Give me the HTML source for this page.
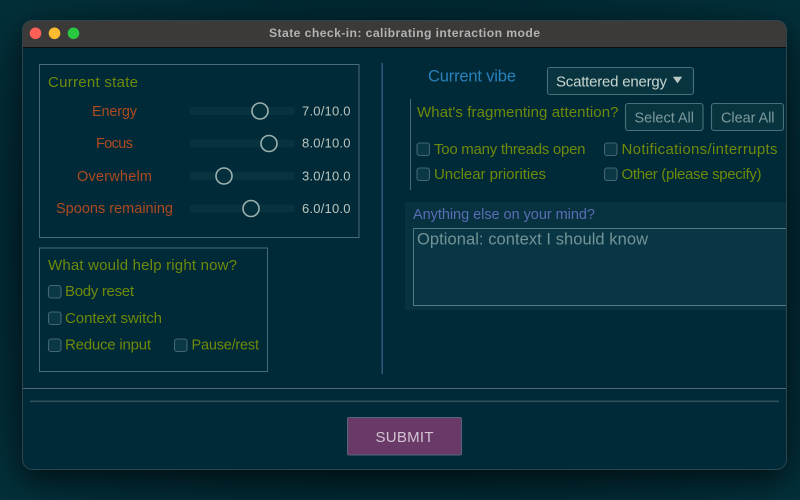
<!DOCTYPE html>
<html>
<head>
<meta charset="utf-8">
<title>State check-in</title>
<style>
html,body{margin:0;padding:0;width:800px;height:500px;overflow:hidden;background:#012a35}
#bg{position:absolute;left:0;top:0;width:800px;height:500px;background:radial-gradient(ellipse at 50% 50%,#01242f 0%,#01252f 60%,#03303b 100%)}
#win{position:absolute;left:22px;top:20px;width:765px;height:450px;border-radius:10px;background:#012a38;box-shadow:0 10px 32px rgba(0,0,0,.62)}
svg{position:absolute;left:0;top:0;filter:blur(.35px)}
text{font-family:"Liberation Sans",sans-serif;white-space:pre}
.g{fill:#6f8a0a;font-size:15px}
.r{fill:#ad4a20;font-size:14.5px}
.v{fill:#bac6be;font-size:13px}
.cb{fill:#0a3945;stroke:#44666f;stroke-width:1.1}
.p{fill:none;stroke:#4a6b75;stroke-width:1}
.t{fill:#07333f}
.k{fill:#03303b;stroke:#9db0b0;stroke-width:1.6}
.b{fill:#08343f;stroke:#46727c;stroke-width:1.1}
</style>
</head>
<body>
<div id="bg"></div>
<div id="win"></div>
<svg width="800" height="500" viewBox="0 0 800 500" xmlns="http://www.w3.org/2000/svg">
  <!-- title bar -->
  <path d="M22 47V30a10 10 0 0 1 10-10H777a10 10 0 0 1 10 10V47Z" fill="#3b3a39"/>
  <rect x="22" y="47" width="765" height="1" fill="#0a0f11"/>
  <circle cx="35.5" cy="33.3" r="5.8" fill="#fe5f57"/>
  <circle cx="54.5" cy="33.3" r="5.8" fill="#febc2e"/>
  <circle cx="73.5" cy="33.3" r="5.8" fill="#28c840"/>
  <text x="269" y="37" textLength="271" style="font-size:12.2px;font-weight:bold;fill:#b2b2b2">State check-in: calibrating interaction mode</text>

  <!-- Current state panel -->
  <rect class="p" x="39.5" y="64.5" width="319.5" height="173"/>
  <text class="g" x="48" y="87" textLength="90">Current state</text>
  <text class="r" x="92" y="116" textLength="45">Energy</text>
  <text class="r" x="96" y="148" textLength="37">Focus</text>
  <text class="r" x="77" y="181" textLength="75">Overwhelm</text>
  <text class="r" x="56" y="213" textLength="117">Spoons remaining</text>

  <rect class="t" x="189" y="107" width="106" height="8" rx="3"/>
  <rect class="t" x="189" y="139.5" width="106" height="8" rx="3"/>
  <rect class="t" x="189" y="172" width="106" height="8" rx="3"/>
  <rect class="t" x="189" y="204.5" width="106" height="8" rx="3"/>
  <circle class="k" cx="260" cy="111" r="8"/>
  <circle class="k" cx="269" cy="143.5" r="8"/>
  <circle class="k" cx="224" cy="176" r="8"/>
  <circle class="k" cx="251" cy="208.5" r="8"/>
  <text class="v" x="302" y="115.5" textLength="48.5">7.0/10.0</text>
  <text class="v" x="302" y="147.5" textLength="48.5">8.0/10.0</text>
  <text class="v" x="302" y="180.5" textLength="48.5">3.0/10.0</text>
  <text class="v" x="302" y="213" textLength="48.5">6.0/10.0</text>

  <!-- help panel -->
  <rect class="p" x="39.5" y="248" width="228" height="123.5"/>
  <text class="g" x="48" y="270" textLength="189">What would help right now?</text>
  <rect class="cb" x="48.5" y="285.5" width="12.5" height="12.5" rx="2.5"/>
  <rect class="cb" x="48.5" y="312" width="12.5" height="12.5" rx="2.5"/>
  <rect class="cb" x="48.5" y="339" width="12.5" height="12.5" rx="2.5"/>
  <rect class="cb" x="174.5" y="339" width="12.5" height="12.5" rx="2.5"/>
  <text class="g" x="65" y="296" textLength="69">Body reset</text>
  <text class="g" x="65" y="323" textLength="97">Context switch</text>
  <text class="g" x="65" y="349.5" textLength="86">Reduce input</text>
  <text class="g" x="191.5" y="349.5" textLength="67.5" style="font-size:14.5px">Pause/rest</text>

  <!-- vertical divider -->
  <rect x="381.5" y="63" width="1.5" height="311" fill="#35567f"/>

  <!-- vibe -->
  <text x="428" y="81.5" textLength="88" style="font-size:16.5px;fill:#2a80b8">Current vibe</text>
  <rect class="b" x="547.5" y="67.5" width="146" height="27" rx="2.5"/>
  <text x="556" y="86.5" textLength="111" style="font-size:15px;fill:#c8d4ce">Scattered energy</text>
  <path d="M672.8 76.8H682.2L677.5 83.4Z" fill="#bccac6"/>

  <!-- attention -->
  <rect x="410" y="99" width="1" height="91" fill="#4a6a70"/>
  <text class="g" x="417" y="117" textLength="201.5">What's fragmenting attention?</text>
  <rect class="b" x="625.5" y="103.5" width="77.5" height="27" rx="2.5"/>
  <text x="634.5" y="122.5" textLength="59.5" style="font-size:14.5px;fill:#7c9a9c">Select All</text>
  <rect class="b" x="711.5" y="103.5" width="72" height="27" rx="2.5"/>
  <text x="721" y="122.5" textLength="53.5" style="font-size:14.5px;fill:#7c9a9c">Clear All</text>

  <rect class="cb" x="417" y="143" width="12.5" height="12.5" rx="2.5"/>
  <rect class="cb" x="417" y="168" width="12.5" height="12.5" rx="2.5"/>
  <rect class="cb" x="604.5" y="143" width="12.5" height="12.5" rx="2.5"/>
  <rect class="cb" x="604.5" y="168" width="12.5" height="12.5" rx="2.5"/>
  <text class="g" x="434" y="154" textLength="151.5">Too many threads open</text>
  <text class="g" x="621.5" y="154" textLength="156">Notifications/interrupts</text>
  <text class="g" x="434" y="179" textLength="112">Unclear priorities</text>
  <text class="g" x="621.5" y="179" textLength="140">Other (please specify)</text>

  <!-- textarea group -->
  <rect x="405" y="202" width="382" height="108" fill="#07323f"/>
  <text x="413" y="219" textLength="182" style="font-size:14.5px;fill:#5a6db5">Anything else on your mind?</text>
  <path d="M787 228H413.5V305.5H787Z" fill="#093645"/>
  <path d="M787 228.5H413.5V305.5H787" fill="none" stroke="#527880" stroke-width="1"/>
  <text x="417" y="244.5" textLength="231" style="font-size:16.5px;fill:#739496">Optional: context I should know</text>

  <!-- footer -->
  <rect x="22" y="388" width="765" height="1" fill="#4d6a72"/>
  <rect x="30" y="400.5" width="749" height="1.6" fill="#2f515b"/>
  <rect x="347.5" y="417.5" width="114" height="37.5" rx="1.5" fill="#693968" stroke="#55657a" stroke-width="1"/>
  <text x="375.5" y="442" textLength="58" style="font-size:15px;fill:#d2c4d2">SUBMIT</text>

  <!-- window edge -->
  <rect x="22.5" y="20.5" width="764" height="449" rx="10" fill="none" stroke="#2f444c" stroke-width="1"/>
</svg>
</body>
</html>
